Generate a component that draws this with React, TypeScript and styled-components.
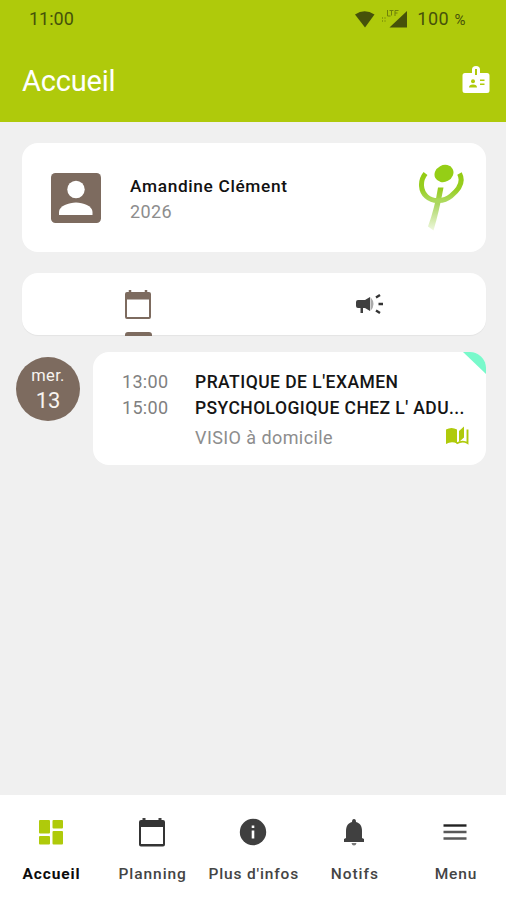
import React from 'react';
import styled, { createGlobalStyle } from 'styled-components';

const GREEN = '#afca0b';
const BROWN = '#7d6b5f';

const GlobalStyle = createGlobalStyle`
  * { box-sizing: border-box; }
  body { margin: 0; background: #f0f0f0; font-family: Roboto, "Liberation Sans", sans-serif; }
`;

const Screen = styled.div`
  display: flex;
  flex-direction: column;
  width: 100%;
  height: 100vh;
  overflow: hidden;
  background: #f0f0f0;
`;

const Header = styled.header`
  flex: none;
  height: 122px;
  background: ${GREEN};
`;

const StatusBar = styled.div`
  display: flex;
  align-items: center;
  height: 38px;
  padding: 0 40px 0 29px;
  color: #46520a;
`;

const StatusText = styled.span<{ $spacing: number }>`
  font-size: 18px;
  line-height: 38px;
  letter-spacing: ${(p) => p.$spacing}px;
  white-space: nowrap;
`;

const Percent = styled.span`
  font-size: 15px;
`;

const StatusIcons = styled.div`
  display: flex;
  align-items: center;
  margin-left: auto;
  margin-right: 9px;
`;

const TitleBar = styled.div`
  display: flex;
  align-items: center;
  justify-content: space-between;
  height: 84px;
  padding: 0 16px 0 22px;
`;

const Title = styled.h1`
  margin: 2px 0 0;
  color: #fff;
  font-size: 29px;
  font-weight: 400;
  letter-spacing: -0.2px;
`;

const Glyph = styled.svg`
  display: block;
  flex: none;
`;

const Content = styled.main`
  display: flex;
  flex: 1;
  flex-direction: column;
  padding: 21px 20px 0 22px;
`;

const Card = styled.section`
  background: #fff;
  border-radius: 16px;
`;

const ProfileCard = styled(Card)`
  display: flex;
  align-items: center;
  height: 109px;
  padding: 0 20px 0 29px;
`;

const Identity = styled.div`
  flex: 1;
  margin-left: 29px;
  padding-top: 3px;
`;

const Name = styled.div`
  color: #111;
  font-size: 17.3px;
  font-weight: 500;
  line-height: 25px;
  letter-spacing: 0.65px;
`;

const Muted = styled.div`
  color: #8d8d8d;
  font-size: 18px;
  line-height: 25px;
  letter-spacing: 0.42px;
`;

const TabsCard = styled(Card)`
  display: grid;
  grid-template-columns: 1fr 1fr;
  height: 62px;
  margin-top: 21px;
  box-shadow: 0 1px 1px rgba(0, 0, 0, 0.05);
`;

const Tab = styled.div`
  display: flex;
  flex-direction: column;
  align-items: center;
  justify-content: space-between;
  padding-top: 15px;
`;

const TabMarker = styled.span`
  width: 27px;
  height: 4px;
  margin-bottom: -1px;
  border-radius: 3px 3px 0 0;
  background: ${BROWN};
`;

const DayRow = styled.div`
  display: flex;
  align-items: flex-start;
  margin: 17px 0 0 -6px;
`;

const DayBadge = styled.div`
  display: flex;
  flex: none;
  flex-direction: column;
  align-items: center;
  width: 64px;
  height: 64px;
  margin: 5px 13px 0 0;
  padding-top: 9px;
  border-radius: 50%;
  background: ${BROWN};
  color: #f8f4f0;
`;

const Weekday = styled.span`
  font-size: 16.5px;
  line-height: 20px;
  letter-spacing: 0.3px;
`;

const DayNumber = styled.span`
  font-size: 22px;
  line-height: 30px;
`;

const EventCard = styled(Card)`
  position: relative;
  display: flex;
  flex: 1;
  height: 113px;
  min-width: 0;
  padding: 16.5px 17px 0 29px;
  overflow: hidden;
`;

const Corner = styled.span`
  position: absolute;
  top: 0;
  right: 0;
  width: 23px;
  height: 22px;
  background: #79f9cb;
  clip-path: polygon(0 0, 100% 0, 100% 100%);
`;

const Times = styled.div`
  width: 73px;
  color: #808080;
  font-size: 18px;
  line-height: 26px;
  letter-spacing: 0.3px;
`;

const Details = styled.div`
  flex: 1;
  min-width: 0;
`;

const EventTitle = styled.div<{ $spacing: number }>`
  color: #151515;
  font-size: 17.5px;
  font-weight: 500;
  line-height: 26px;
  letter-spacing: ${(p) => p.$spacing}px;
  white-space: nowrap;
`;

const PlaceRow = styled.div`
  display: flex;
  align-items: center;
  justify-content: space-between;
  margin-top: 4px;
`;

const BottomNav = styled.nav`
  display: grid;
  flex: none;
  grid-template-columns: repeat(5, 1fr);
  height: 105px;
  padding-left: 0.5px;
  background: #fff;
`;

const NavItem = styled.div`
  display: flex;
  flex-direction: column;
  align-items: center;
  padding-top: 20px;
`;

const NavLabel = styled.span<{ $active?: boolean; $spacing: number }>`
  margin: 15px 0 0 1px;
  color: ${(p) => (p.$active ? '#0c0c0c' : '#444')};
  font-size: 15.5px;
  font-weight: ${(p) => (p.$active ? 700 : 500)};
  line-height: 20px;
  letter-spacing: ${(p) => p.$spacing}px;
  white-space: nowrap;
`;

const SignalIcons = () => (
  <Glyph width="54" height="24" viewBox="0 0 54 24" fill="#46520a">
    <path d="M1 7.500Q10.500 1 20.500 7.500L11 20.500Z" />
    <path d="M53 4V20.500H35.500Z" />
    <g stroke="#46520a" fill="none" opacity=".6">
      <path d="M28.500 10v6M31 10v6" strokeDasharray="2 1" opacity=".6" />
      <path d="M33.500 3v6h3M35.500 3.500h4M37.500 3.500v5M41 9V3.500h3.500M41 6h2.500" />
    </g>
  </Glyph>
);

const BadgeIcon = () => (
  <Glyph width="28" height="30" viewBox="0 0 28 30">
    <path d="M3 8h7V4.500Q10 1 14 1t4 3.500V8h7q2.500 0 2.500 2.500v15Q27.500 28 25 28H3Q.5 28 .5 25.500v-15Q.5 8 3 8Z" fill="#fff" />
    <path d="M13 4h2v6h-2ZM7 22.500q0-3 4-3t4 3ZM18 14.500h4.500V16H18ZM18 18.500h4.500V20H18Z" fill={GREEN} />
    <circle cx="11" cy="16.300" r="2" fill={GREEN} />
  </Glyph>
);

const PersonIcon = () => (
  <Glyph width="50" height="50" viewBox="0 0 50 50">
    <rect width="50" height="50" rx="4.500" fill={BROWN} />
    <circle cx="25" cy="16.500" r="8.700" fill="#fff" />
    <path d="M8 42v-3c0-6 10-9.500 17-9.500S41.500 33 41.500 39v3Z" fill="#fff" />
  </Glyph>
);

const SchoolLogo = () => (
  <Glyph width="50" height="72" viewBox="0 0 50 72">
    <defs>
      <linearGradient id="stem" x1="0" y1="0" x2="0" y2="1">
        <stop offset="0" stopColor="#95cc18" />
        <stop offset=".4" stopColor="#add765" />
        <stop offset="1" stopColor="#eff8df" />
      </linearGradient>
      <linearGradient id="bowl" x1="0" y1="0" x2="0" y2="1">
        <stop offset="0" stopColor="#94cb12" />
        <stop offset=".6" stopColor="#98cf24" />
        <stop offset="1" stopColor="#acd95c" />
      </linearGradient>
    </defs>
    <path d="M22 25.500h5.500Q23 50 17.500 68.500l-5.500-4Q19 45 22 25.500Z" fill="url(#stem)" />
    <path d="M9.500 11.500C3.500 19 4.500 29 10.500 34.500 17 40.500 28 39.500 35 34 42.500 28 48 20 43.500 11.500" fill="none" stroke="url(#bowl)" strokeWidth="5" />
    <ellipse cx="28" cy="11.500" rx="9.800" ry="8.300" transform="rotate(-28 28 11.500)" fill="#95ce16" />
  </Glyph>
);

const CalendarIcon = ({ color }: { color: string }) => (
  <Glyph width="28" height="34" viewBox="0 0 28 34">
    <path d="M6 5V2M22 5V2" stroke={color} strokeWidth="2.500" fill="none" />
    <path fillRule="evenodd" clipRule="evenodd" d="M3 4h22q2 0 2 2v23q0 2-2 2H3q-2 0-2-2V6q0-2 2-2Zm0 7.500V29h22V11.500Z" fill={color} />
  </Glyph>
);

const MegaphoneIcon = () => (
  <Glyph width="28" height="32" viewBox="0 0 28 32">
    <path d="M0 14q0-2 2-2h7l5-3v14l-5-3H7v5H4.500v-5H2q-2 0-2-2Z" fill="#3f3f3f" />
    <path d="M14.500 9q6 7 0 14Z" fill="#aaa" />
    <path d="m20 9.500 4-2.500M22.500 16H27M20 22.500l4 2.500" stroke="#333" strokeWidth="2.400" />
  </Glyph>
);

const BookIcon = () => (
  <Glyph width="23" height="22" viewBox="0 0 23 22">
    <path d="M0 3.500Q5.500 .5 11 3.500V17.500Q5.500 15 0 18Z" fill={GREEN} />
    <path d="m13 5 5-4.500v11l-5 4.500Z" fill={GREEN} />
    <path d="M10.500 17.500Q16.500 14 21.500 17V3.500" fill="none" stroke={GREEN} strokeWidth="1.900" />
  </Glyph>
);

const DashboardIcon = () => (
  <Glyph width="26" height="34" viewBox="0 0 26 34" fill={GREEN}>
    <rect x="1" y="5" width="11" height="13.500" rx="1" />
    <rect x="14.500" y="5" width="10.500" height="8.500" rx="1" />
    <rect x="1" y="21" width="11" height="8.500" rx="1" />
    <rect x="14.500" y="16" width="10.500" height="13.500" rx="1" />
  </Glyph>
);

const PlanningIcon = () => (
  <Glyph width="28" height="34" viewBox="0 0 28 34">
    <path d="M6 6V3M22 6V3" stroke="#3f3f3f" strokeWidth="3" />
    <path fillRule="evenodd" d="M3 5h22q2 0 2 2v22.500q0 2-2 2H3q-2 0-2-2V7q0-2 2-2Zm0 7v17h22V12Z" fill="#343434" />
  </Glyph>
);

const InfoIcon = () => (
  <Glyph width="28" height="34" viewBox="0 0 28 34">
    <circle cx="14" cy="17" r="13.200" fill="#3f3f3f" />
    <path d="M12.700 15.500h2.600v8h-2.600ZM12.700 10.500h2.600v2.600h-2.600Z" fill="#fff" />
  </Glyph>
);

const BellIcon = () => (
  <Glyph width="22" height="34" viewBox="0 0 22 34" fill="#404040">
    <path d="M11 4q2 0 2 3c4 1 6 4 6 9v7l2 1v3H1v-3l2-1v-7c0-5 2-8 6-9q0-3 2-3Z" />
    <path d="M8.500 28h5q-.5 2.500-2.500 2.500T8.500 28Z" opacity=".7" />
  </Glyph>
);

const MenuIcon = () => (
  <Glyph width="24" height="34" viewBox="0 0 24 34">
    <path d="M.5 10.500h23" stroke="#222" strokeWidth="2.400" />
    <path d="M.5 17h23M.5 23.500h23" stroke="#595959" strokeWidth="2.400" />
  </Glyph>
);

const navItems = [
  { label: 'Accueil', icon: <DashboardIcon />, active: true, spacing: 0.9 },
  { label: 'Planning', icon: <PlanningIcon />, spacing: 0.95 },
  { label: "Plus d'infos", icon: <InfoIcon />, spacing: 0.85 },
  { label: 'Notifs', icon: <BellIcon />, spacing: 0.95 },
  { label: 'Menu', icon: <MenuIcon />, spacing: 0.85 },
];

export default function App() {
  return (
    <Screen>
      <GlobalStyle />
      <Header>
        <StatusBar>
          <StatusText $spacing={0}>11:00</StatusText>
          <StatusIcons>
            <SignalIcons />
          </StatusIcons>
          <StatusText $spacing={0.6}>
            100 <Percent>%</Percent>
          </StatusText>
        </StatusBar>
        <TitleBar>
          <Title>Accueil</Title>
          <BadgeIcon />
        </TitleBar>
      </Header>
      <Content>
        <ProfileCard>
          <PersonIcon />
          <Identity>
            <Name>Amandine Clément</Name>
            <Muted>2026</Muted>
          </Identity>
          <SchoolLogo />
        </ProfileCard>
        <TabsCard>
          <Tab>
            <CalendarIcon color={BROWN} />
            <TabMarker />
          </Tab>
          <Tab>
            <MegaphoneIcon />
          </Tab>
        </TabsCard>
        <DayRow>
          <DayBadge>
            <Weekday>mer.</Weekday>
            <DayNumber>13</DayNumber>
          </DayBadge>
          <EventCard>
            <Corner />
            <Times>
              <div>13:00</div>
              <div>15:00</div>
            </Times>
            <Details>
              <EventTitle $spacing={0.46}>PRATIQUE DE L'EXAMEN</EventTitle>
              <EventTitle $spacing={0.42}>PSYCHOLOGIQUE CHEZ L' ADU...</EventTitle>
              <PlaceRow>
                <Muted>VISIO à domicile</Muted>
                <BookIcon />
              </PlaceRow>
            </Details>
          </EventCard>
        </DayRow>
      </Content>
      <BottomNav>
        {navItems.map((item) => (
          <NavItem key={item.label}>
            {item.icon}
            <NavLabel $active={item.active} $spacing={item.spacing}>
              {item.label}
            </NavLabel>
          </NavItem>
        ))}
      </BottomNav>
    </Screen>
  );
}
